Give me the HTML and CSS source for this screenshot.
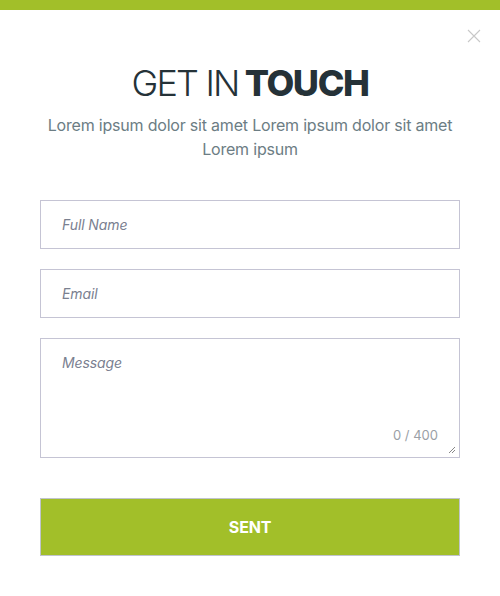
FILE: index.html
```html
<!DOCTYPE html>
<html>
<head>
<meta charset="utf-8">
<link rel="stylesheet" href="styles.css">
</head>
<body>
<div class="modal">
  <div class="topbar"></div>
  <div class="close-row">
    <svg class="close" width="14" height="14" viewBox="0 0 14 14"><path d="M1 1L13 13M13 1L1 13" stroke="#c8c8c8" stroke-width="1.1" fill="none"/></svg>
  </div>
  <h1 class="title"><span class="light">GET IN</span><span class="bold">TOUCH</span></h1>
  <p class="subtitle">Lorem ipsum dolor sit amet Lorem ipsum dolor sit amet Lorem ipsum</p>
  <form class="form">
    <div class="field"><span class="ph">Full Name</span></div>
    <div class="field"><span class="ph">Email</span></div>
    <div class="field area">
      <span class="ph">Message</span>
      <span class="counter">0 / 400</span>
      <svg class="grip" width="8" height="8" viewBox="0 0 8 8"><path d="M7 1L1 7M7 4L4 7" stroke="#888" stroke-width="1" fill="none"/></svg>
    </div>
    <div class="btn">SENT</div>
  </form>
</div>
</body>
</html>
```
FILE: styles.css
```css
* { box-sizing: border-box; }
html, body { margin: 0; padding: 0; background: #fff; }
body { font-family: "Inter", "Noto Sans", sans-serif; width: 500px; height: 596px; overflow: hidden; }
.modal { display: flex; flex-direction: column; }
.topbar { height: 10px; background: #a2bf29; }
.close-row { display: flex; justify-content: flex-end; padding: 19px 19px 0 0; height: 42px; }
.close-row .close { display: block; }
.title { margin: 9px 0 0; text-align: center; font-size: 36px; line-height: 45px; color: #253238; letter-spacing: -1.8px; font-weight: 400; }
.title .light { font-weight: 300; margin-right: 6px; }
.title .bold { font-weight: 800; letter-spacing: -1.4px; }
.subtitle { margin: 7px auto 0; width: 430px; text-align: center; font-size: 16px; line-height: 24px; color: #6c7d84; letter-spacing: -0.2px; }
.form { display: flex; flex-direction: column; gap: 20px; padding: 39px 40px 0; }
.field { position: relative; height: 49px; border: 1px solid #c5c4d4; display: flex; align-items: center; padding-left: 21px; }
.field.area { height: 120px; align-items: flex-start; padding-top: 15px; }
.ph { font-size: 14px; font-style: italic; color: #7a8090; letter-spacing: -0.1px; }
.counter { position: absolute; right: 21px; bottom: 14px; font-size: 13px; color: #9aa0a6; }
.grip { position: absolute; right: 3px; bottom: 3px; }
.btn { margin-top: 20px; height: 58px; background: #a2bf29; border: 1px solid #c0c4cc; display: flex; align-items: center; justify-content: center; color: #fff; font-weight: 700; font-size: 16px; letter-spacing: -0.2px; }
```
